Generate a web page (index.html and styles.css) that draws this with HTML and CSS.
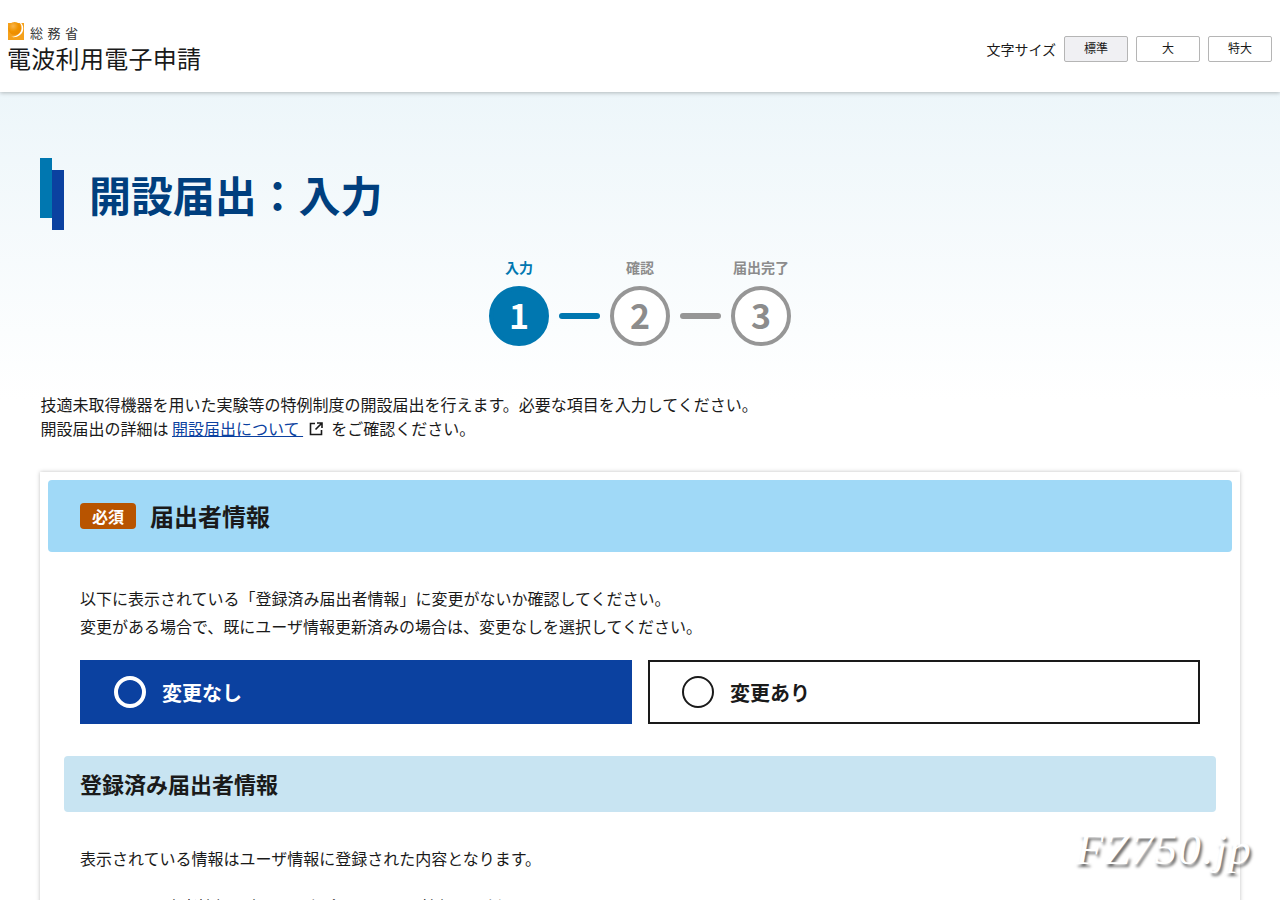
FILE: index.html
```html
<!DOCTYPE html>
<html lang="ja">
<head>
<meta charset="utf-8">
<title>開設届出：入力</title>
<link rel="stylesheet" href="styles.css">
</head>
<body>
<header class="site-header">
  <div class="logo">
    <div class="logo-top">
      <svg class="logo-mark" viewBox="0 0 16 18" width="16" height="18" aria-hidden="true">
        <defs>
          <radialGradient id="ball" cx=".38" cy=".32" r=".7">
            <stop offset="0" stop-color="#f9b54c"/>
            <stop offset=".6" stop-color="#f09400"/>
            <stop offset="1" stop-color="#ec8a00"/>
          </radialGradient>
        </defs>
        <rect y="1" width="16" height="17" fill="#f5a11c"/>
        <path d="M13.2 1C15.2 3 15.6 6 15 8.5 13.8 13.2 8.5 16.2 3 14.8 8 14.6 13.6 11.4 13.6 6.2 13.6 4 13.2 2.4 11.8 1Z" fill="#fff"/>
        <circle cx="6.6" cy="6.4" r="6.4" fill="url(#ball)"/>
      </svg>
      <span class="logo-org">総務省</span>
    </div>
    <div class="logo-name">電波利用電子申請</div>
  </div>
  <div class="font-size">
    <span class="font-size-label">文字サイズ</span>
    <button class="size-btn is-current">標準</button>
    <button class="size-btn">大</button>
    <button class="size-btn">特大</button>
  </div>
</header>

<main class="page">
  <div class="title-row">
    <div class="title-bars"><span class="bar-a"></span><span class="bar-b"></span></div>
    <h1 class="page-title">開設届出：入力</h1>
  </div>

  <ol class="steps">
    <li class="step is-active"><span class="step-label">入力</span><span class="step-num">1</span></li>
    <li class="step-line is-active"></li>
    <li class="step"><span class="step-label">確認</span><span class="step-num">2</span></li>
    <li class="step-line"></li>
    <li class="step"><span class="step-label">届出完了</span><span class="step-num">3</span></li>
  </ol>

  <div class="intro">
    <p>技適未取得機器を用いた実験等の特例制度の開設届出を行えます。必要な項目を入力してください。</p>
    <p>開設届出の詳細は <a class="ext-link" href="#">開設届出について&nbsp;</a>
      <svg class="ext-icon" viewBox="0 0 16 16" width="16" height="16" aria-hidden="true"><path d="M7 2.5H2.5V13.5H13.5V9M9 2H14V7M14 2L7.5 8.5" fill="none" stroke="#1a1a1a" stroke-width="1.6"/></svg>
      をご確認ください。</p>
  </div>

  <section class="card">
    <div class="card-head">
      <span class="req-tag">必須</span>
      <h2 class="card-title">届出者情報</h2>
    </div>
    <div class="card-body">
      <p class="lead">以下に表示されている「登録済み届出者情報」に変更がないか確認してください。<br>変更がある場合で、既にユーザ情報更新済みの場合は、変更なしを選択してください。</p>
      <div class="choices">
        <label class="choice is-selected"><span class="radio"></span>変更なし</label>
        <label class="choice"><span class="radio"></span>変更あり</label>
      </div>
    </div>
    <div class="sub-head"><h3 class="sub-title">登録済み届出者情報</h3></div>
    <div class="card-body sub-body">
      <p class="sub-text">表示されている情報はユーザ情報に登録された内容となります。</p>
      <p class="sub-text note">届出者情報を変更する場合は、ユーザ情報を更新してください。</p>
    </div>
  </section>
</main>
<div class="watermark">FZ750.jp</div>
</body>
</html>
```
FILE: styles.css
```css
* { box-sizing: border-box; }
html, body { margin: 0; padding: 0; height: 900px; overflow: hidden; }
body {
  font-family: "Noto Sans CJK JP", "Noto Sans", sans-serif;
  font-size: 16px;
  color: #1a1a1a;
  background: linear-gradient(180deg, #edf6fa 92px, #ffffff 400px);
  position: relative;
}
p, h1, h2, h3, ol { margin: 0; padding: 0; }

.site-header {
  height: 92px;
  background: #fff;
  box-shadow: 0 1px 4px rgba(0, 0, 0, .25);
  display: flex;
  justify-content: space-between;
  align-items: flex-start;
  padding: 0 8px;
  position: relative;
}
.logo { padding-top: 22px; }
.logo-top { display: flex; align-items: center; height: 18px; }
.logo-mark { display: block; }
.logo-org { font-size: 13px; letter-spacing: 4.5px; margin-left: 6px; margin-top: 4px; color: #333; line-height: 18px; }
.logo-name { font-size: 24px; line-height: 36px; color: #1a1a1a; margin-left: -1px; font-weight: 400; letter-spacing: .3px; }

.font-size { display: flex; align-items: center; gap: 8px; padding-top: 36px; }
.font-size-label { font-size: 14px; line-height: 26px; }
.size-btn {
  width: 64px; height: 26px;
  font: inherit; font-size: 12px; line-height: 1;
  color: #1a1a1a;
  background: #fff;
  border: 1px solid #b5b5b5;
  border-radius: 2px;
  padding: 0 0 2px;
}
.size-btn.is-current { background: #f0f0f3; }

.page { padding: 66px 40px 0; }
.title-row { display: flex; align-items: center; gap: 25px; height: 72px; }
.title-bars { display: flex; width: 24px; height: 72px; }
.bar-a { width: 12px; height: 60px; background: #0077b0; }
.bar-b { width: 12px; height: 60px; margin-top: 12px; background: #0b41a0; }
.page-title { font-size: 42px; line-height: 72px; font-weight: 700; color: #003f7e; letter-spacing: -.1px; }

.steps { list-style: none; display: flex; justify-content: center; align-items: flex-end; margin-top: 27px; }
.step { width: 60px; display: flex; flex-direction: column; align-items: center; }
.step-label { font-size: 14px; line-height: 20px; font-weight: 700; color: #8c8c8c; white-space: nowrap; margin-bottom: 9px; }
.step-num {
  width: 60px; height: 60px; border-radius: 50%;
  border: 4px solid #969696;
  background: #fff;
  color: #8c8c8c;
  font-size: 34px; font-weight: 700; line-height: 50px; text-align: center;
}
.step.is-active .step-label { color: #0077b0; }
.step.is-active .step-num { background: #0077b0; border-color: #0077b0; color: #fff; }
.step-line { width: 41px; height: 6px; margin: 0 10px 27px; border-radius: 3px; background: #969696; }
.step-line.is-active { background: #0077b0; }

.intro { margin-top: 46px; line-height: 24px; padding-left: .4px; }
.intro p { white-space: nowrap; }
.ext-link { color: #0b41a0; text-decoration: underline; }
.ext-icon { vertical-align: -2px; margin: 0 4px 0 1px; }

.card {
  margin-top: 32px;
  background: #fff;
  padding: 8px;
  box-shadow: 0 0 4px rgba(0, 0, 0, .25);
  height: 500px;
}
.card-head {
  height: 72px;
  background: #a0d9f7;
  border-radius: 4px;
  padding: 0 32px;
  display: flex;
  align-items: center;
  gap: 14px;
}
.req-tag {
  width: 56px; height: 26px;
  background: #b85400; color: #fff;
  border-radius: 4px;
  font-size: 16px; font-weight: 700; line-height: 26px; text-align: center;
}
.card-title { font-size: 24px; font-weight: 600; line-height: 36px; }
.card-body { padding: 32px 32px 0; }
.lead { line-height: 28px; }
.choices { display: grid; grid-template-columns: 1fr 1fr; gap: 16px; margin-top: 20px; }
.choice {
  height: 64px;
  display: flex; align-items: center; gap: 16px;
  padding-left: 32px;
  border: 2px solid #1a1a1a;
  font-size: 20px; font-weight: 700;
  background: #fff;
}
.radio { width: 32px; height: 32px; border-radius: 50%; border: 2px solid #1a1a1a; background: #fff; }
.choice.is-selected { background: #0b41a0; border-color: #0b41a0; color: #fff; }
.choice.is-selected .radio { border: 4px solid #fff; background: #0b41a0; }
.sub-head {
  margin: 32px 16px 0;
  height: 56px;
  background: #c8e4f2;
  border-radius: 4px;
  padding: 0 16px 2px;
  display: flex; align-items: center;
}
.sub-title { font-size: 22px; font-weight: 600; line-height: 32px; }
.sub-body { padding-top: 32px; }
.sub-text { line-height: 28px; }
.note { margin-top: 20px; padding-left: 70px; }

.watermark {
  position: absolute;
  left: 1076px; top: 821px;
  font-family: "Liberation Serif", serif;
  font-style: italic;
  font-size: 45px;
  letter-spacing: 1.2px;
  line-height: 56px;
  color: #fff;
  white-space: nowrap;
  text-shadow: 2px 3px 3px rgba(0, 0, 0, .6);
}
```
